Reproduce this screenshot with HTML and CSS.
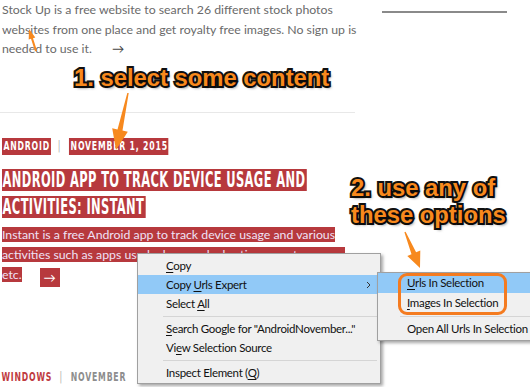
FILE: index.html
```html
<!DOCTYPE html>
<html lang="en">
<head>
  <meta charset="UTF-8">
  <title>Copy Urls Expert</title>
  <link rel="stylesheet" href="styles.css">
</head>
<body>
  <div class="page">
    <main class="posts">
      <p class="intro">Stock Up is a free website to search 26 different stock photos<br>websites from one place and get royalty free images. No sign up is<br>needed to use it. <span class="more">&rarr;</span></p>
      <div class="divider"></div>

      <article class="post">
        <div class="meta"><span class="cat sel">ANDROID</span><span class="pipe">|</span><span class="date sel">NOVEMBER 1, 2015</span></div>
        <h2 class="title">
          <span class="line">ANDROID APP TO TRACK DEVICE USAGE AND</span>
          <span class="line">ACTIVITIES: INSTANT</span>
        </h2>
        <p class="excerpt"><span class="sel">Instant is a free Android app to track device usage and various</span><br><span class="sel">activities such as apps used, phone unlocks, time spent on apps,</span><br><span class="sel">etc.</span><span class="more sel">&rarr;</span></p>
      </article>

      <div class="meta next"><span class="cat">WINDOWS</span><span class="pipe">|</span><span class="date">NOVEMBER</span></div>
    </main>
    <aside class="sidebar">
      <div class="rule"></div>
    </aside>
  </div>

  <div class="note note-one">1. select some content</div>
  <div class="note note-two">2. use any of<br>these options</div>

  <svg class="arrows" width="530" height="387" viewBox="0 0 530 387">
    <polygon points="35,51.3 37,50.7 33,38.2 35.3,37.4 29,29 28.7,39.6 31,38.8"/>
    <polygon points="127.3,92.9 128.7,93.1 122.5,130.5 127.8,131.7 116,150 112.2,128.3 117.5,129.5"/>
    <polygon points="404.4,232.3 405.6,231.7 416.1,252.2 420.3,250.5 420,268 407.3,255.9 411.5,254.2"/>
  </svg>

  <div class="menu">
    <div class="item"><u>C</u>opy</div>
    <div class="item active">Copy <u>U</u>rls Expert
      <svg class="chevron" width="5" height="8" viewBox="0 0 5 8"><path d="M1 1l3 3-3 3" fill="none" stroke="#333" stroke-width="1"/></svg>
    </div>
    <div class="item">Select <u>A</u>ll</div>
    <div class="sep"></div>
    <div class="item"><u>S</u>earch Google for "AndroidNovember..."</div>
    <div class="item">Vi<u>e</u>w Selection Source</div>
    <div class="sep"></div>
    <div class="item">Inspect Element (<u>Q</u>)</div>
  </div>

  <div class="menu submenu">
    <div class="item active"><u>U</u>rls In Selection</div>
    <div class="item"><u>I</u>mages In Selection</div>
    <div class="sep"></div>
    <div class="item">Open All Urls In Selection</div>
  </div>
  <div class="callout"></div>
</body>
</html>
```

FILE: styles.css
```css
body {
  margin: 0;
  background: #fff;
  overflow: hidden;
  font-family: Lato, "Open Sans", sans-serif;
}

.page {
  display: flex;
}

.posts {
  width: 355px;
  flex: none;
}

.sidebar {
  margin-left: 27px;
}

.sidebar .rule {
  width: 125px;
  height: 2px;
  margin-top: 11px;
  background: #8a8a8a;
}

.intro {
  margin: 0 0 0 2px;
  font-size: 12.3px;
  line-height: 19.5px;
  color: #6a6a6a;
  white-space: nowrap;
}

.intro .more {
  margin-left: 17px;
  color: #444;
}

.divider {
  height: 1px;
  margin-top: 53px;
  background: #e8e8e8;
}

.post {
  padding-left: 2px;
}

.meta {
  display: flex;
  align-items: center;
  height: 17px;
  margin-top: 25px;
  font-family: "DejaVu Sans Condensed", sans-serif;
  font-weight: bold;
  font-size: 12px;
  letter-spacing: 1.1px;
  transform: scaleX(0.72);
  transform-origin: 0 0;
  white-space: nowrap;
}

.meta span {
  display: block;
  height: 17px;
  line-height: 17px;
}

.meta .sel {
  background: #b7393d;
  color: #fff;
  padding: 0 1px 0 2px;
}

.meta .pipe {
  color: #aaa;
  font-weight: normal;
  margin: 0 11px 0 10px;
}

.title {
  margin: 14px 0 0;
  font-family: "DejaVu Sans Condensed", sans-serif;
  font-weight: bold;
  font-size: 20.5px;
  letter-spacing: 0.6px;
  transform: scaleX(0.622);
  transform-origin: 0 0;
  white-space: nowrap;
}

.title .line {
  display: block;
  width: fit-content;
  height: 22px;
  line-height: 23px;
  margin-bottom: 5px;
  padding: 0 2px 0 1px;
  background: #b7393d;
  color: #fff;
}

.excerpt {
  margin: 7px 0 0;
  font-size: 12.3px;
  line-height: 20px;
  white-space: nowrap;
}

.excerpt .sel {
  background: #b7393d;
  color: #efe2f6;
}

.excerpt .more {
  display: inline-block;
  height: 19px;
  line-height: 19px;
  margin-left: 18px;
  padding: 0 4px;
  vertical-align: -3px;
  color: #fff;
}

.meta.next {
  margin-top: 82px;
  padding-left: 2px;
}

.meta.next .cat {
  color: #c03b3f;
}

.meta.next .date {
  color: #8d8d8d;
}

/* annotations */
.note {
  position: absolute;
  font-family: "Liberation Sans", Arial, sans-serif;
  font-weight: bold;
  color: #f8891d;
  -webkit-text-stroke: 4px #111;
  paint-order: stroke fill;
  text-shadow: 2px 2px 3px rgba(0, 0, 0, 0.55);
  white-space: nowrap;
}

.note-one {
  left: 74px;
  top: 64px;
  font-size: 23.8px;
  line-height: 28px;
}

.note-two {
  left: 351px;
  top: 174px;
  font-size: 23.8px;
  line-height: 27px;
}

.arrows {
  position: absolute;
  left: 0;
  top: 0;
  pointer-events: none;
}

.arrows polygon {
  fill: #f7891e;
}

/* context menu */
.menu {
  position: absolute;
  left: 137px;
  top: 253px;
  width: 242px;
  padding: 2px 0 1px;
  background: #f0f0f0;
  border: 1px solid #a0a0a0;
  box-shadow: 2px 2px 3px rgba(0, 0, 0, 0.35);
  font-family: Lato, "Noto Sans", sans-serif;
  font-size: 11.5px;
  letter-spacing: -0.3px;
  color: #111;
}

.menu .item {
  position: relative;
  height: 19px;
  line-height: 19px;
  margin: 0 3px 0 0;
  padding-left: 28px;
  white-space: nowrap;
}

.menu .item.active {
  background: #91c9f7;
}

.menu .sep {
  height: 1px;
  margin: 3px 3px 2px 25px;
  background: #d5d5d5;
}

.menu u {
  text-underline-offset: 2px;
}

.chevron {
  position: absolute;
  right: 6px;
  top: 6px;
}

.submenu {
  left: 377px;
  top: 272px;
  width: 170px;
  padding: 0 0 1px;
}

.submenu .item {
  height: 20px;
  line-height: 20px;
  padding-left: 29px;
  margin: 0;
}

.submenu .sep {
  margin: 3px 0 2px 22px;
}

.callout {
  position: absolute;
  left: 398px;
  top: 273px;
  width: 103px;
  height: 36px;
  border: 3px solid #f47b20;
  border-radius: 9px;
}
```
